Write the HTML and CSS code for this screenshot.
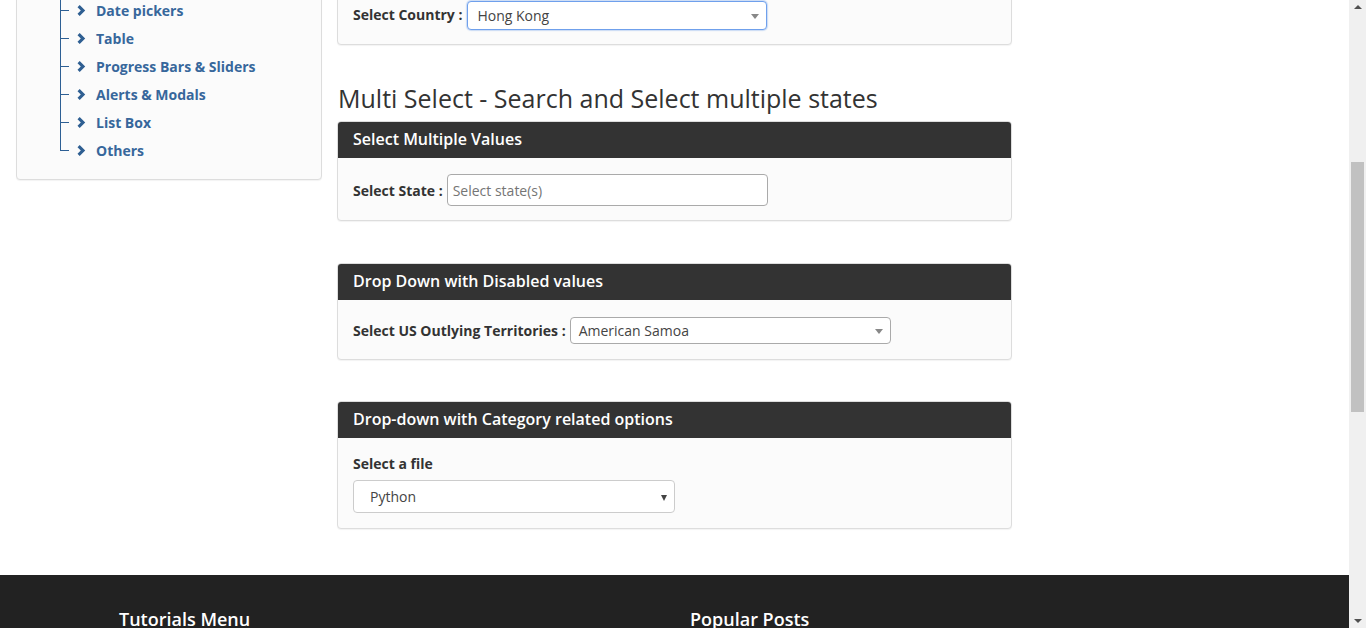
FILE: index.html
```html
<!DOCTYPE html>
<html lang="en">
<head>
<meta charset="utf-8">
<title>Select Dropdown List</title>
<link rel="stylesheet" href="styles.css">
</head>
<body>
<div class="window">
  <div class="page">
    <div class="content">
      <aside class="sidebar-col">
        <div class="sidebar-box">
          <ul class="tree">
            <li><a href="#"><svg class="chev" viewBox="0 0 9 11" width="9" height="11"><polygon points="0.5,2.2 2.7,0 8.2,5.5 2.7,11 0.5,8.8 3.8,5.5"/></svg>Date pickers</a></li>
            <li><a href="#"><svg class="chev" viewBox="0 0 9 11" width="9" height="11"><polygon points="0.5,2.2 2.7,0 8.2,5.5 2.7,11 0.5,8.8 3.8,5.5"/></svg>Table</a></li>
            <li><a href="#"><svg class="chev" viewBox="0 0 9 11" width="9" height="11"><polygon points="0.5,2.2 2.7,0 8.2,5.5 2.7,11 0.5,8.8 3.8,5.5"/></svg>Progress Bars &amp; Sliders</a></li>
            <li><a href="#"><svg class="chev" viewBox="0 0 9 11" width="9" height="11"><polygon points="0.5,2.2 2.7,0 8.2,5.5 2.7,11 0.5,8.8 3.8,5.5"/></svg>Alerts &amp; Modals</a></li>
            <li><a href="#"><svg class="chev" viewBox="0 0 9 11" width="9" height="11"><polygon points="0.5,2.2 2.7,0 8.2,5.5 2.7,11 0.5,8.8 3.8,5.5"/></svg>List Box</a></li>
            <li><a href="#"><svg class="chev" viewBox="0 0 9 11" width="9" height="11"><polygon points="0.5,2.2 2.7,0 8.2,5.5 2.7,11 0.5,8.8 3.8,5.5"/></svg>Others</a></li>
          </ul>
        </div>
      </aside>
      <main class="main-col">
        <section class="panel panel-first">
          <div class="panel-body row-body">
            <span class="label label-raised">Select Country :</span>
            <div class="s2 s2-focus s2-country"><span class="s2-text">Hong Kong</span><span class="s2-arrow"></span></div>
          </div>
        </section>

        <h3 class="section-title">Multi Select - Search and Select multiple states</h3>

        <section class="panel panel-multi">
          <div class="panel-heading">Select Multiple Values</div>
          <div class="panel-body row-body">
            <span class="label">Select State :</span>
            <div class="s2-multi"><span class="placeholder">Select state(s)</span></div>
          </div>
        </section>

        <section class="panel panel-disabled">
          <div class="panel-heading">Drop Down with Disabled values</div>
          <div class="panel-body row-body">
            <span class="label">Select US Outlying Territories :</span>
            <div class="s2 s2-territory"><span class="s2-text">American Samoa</span><span class="s2-arrow"></span></div>
          </div>
        </section>

        <section class="panel panel-category">
          <div class="panel-heading">Drop-down with Category related options</div>
          <div class="panel-body">
            <div class="label label-block">Select a file</div>
            <div class="native-select"><span class="ns-text">Python</span><span class="ns-arrow"></span></div>
          </div>
        </section>
      </main>
    </div>
    <footer class="footer">
      <div class="footer-inner">
        <div class="fcol"><h4 class="ftitle">Tutorials Menu</h4></div>
        <div class="fcol"><h4 class="ftitle">Popular Posts</h4></div>
      </div>
    </footer>
  </div>
  <div class="scrollbar">
    <div class="sb-btn"><span class="sb-up"></span></div>
    <div class="sb-track"><div class="sb-thumb"></div></div>
    <div class="sb-btn sb-btn-bottom"><span class="sb-down"></span></div>
  </div>
</div>
</body>
</html>
```

FILE: styles.css
```css
* { box-sizing: border-box; }

html, body {
  margin: 0;
  padding: 0;
  height: 628px;
  overflow: hidden;
  background: #fff;
  font-family: "Open Sans", "Noto Sans", "Liberation Sans", sans-serif;
  font-size: 14px;
  color: #333;
}

.window {
  display: flex;
  height: 628px;
}

.page {
  flex: 1;
  height: 628px;
  overflow: hidden;
  display: flex;
  flex-direction: column;
}

.content {
  display: flex;
  align-items: flex-start;
}

/* Sidebar */
.sidebar-col {
  width: 337px;
  padding-left: 16px;
  flex-shrink: 0;
}

.sidebar-box {
  width: 306px;
  margin-top: -5px;
  background: #fbfbfb;
  border: 1px solid #ddd;
  border-radius: 4px;
  box-shadow: 0 1px 1px rgba(0,0,0,0.05);
  padding: 0 0 15px;
}

.tree {
  list-style: none;
  margin: 0 0 0 43px;
  padding: 0;
}

.tree li {
  position: relative;
  height: 28px;
  padding-left: 17px;
  display: flex;
  align-items: center;
}

.tree li::before {
  content: "";
  position: absolute;
  left: 0;
  top: 0;
  bottom: 0;
  width: 1px;
  background: #2d5f94;
}

.tree li:last-child::before {
  bottom: 13px;
}

.tree li::after {
  content: "";
  position: absolute;
  left: 0;
  top: 14px;
  width: 9px;
  height: 1px;
  background: #2d5f94;
}

.tree a {
  display: flex;
  align-items: center;
  gap: 10px;
  color: #37679b;
  font-weight: bold;
  font-size: 14px;
  text-decoration: none;
}

.chev {
  flex-shrink: 0;
}

.chev polygon {
  fill: #2f5f92;
}

/* Main column */
.main-col {
  width: 675px;
  flex-shrink: 0;
}

.panel {
  background: #fbfbfb;
  border: 1px solid #ddd;
  border-radius: 4px;
  box-shadow: 0 1px 1px rgba(0,0,0,0.05);
  overflow: hidden;
}

.panel-first {
  margin-top: -16px;
}

.panel-disabled {
  margin-top: 42px;
}

.panel-category {
  margin-top: 41px;
}

.panel-heading {
  background: #333;
  color: #fff;
  font-weight: 600;
  font-size: 16px;
  line-height: 18px;
  height: 37px;
  padding: 9px 15px 10px 16px;
  margin: -1px -1px 0;
}

.panel-body {
  padding: 16px 15px 15px;
}

.panel-first .panel-body {
  padding: 16px 15px 14px;
}

.panel-multi .panel-body {
  padding: 16px 15px 14px;
}

.panel-disabled .panel-body {
  padding: 17px 15px 15px;
}

.row-body {
  display: flex;
  align-items: center;
  gap: 4px;
}

.label {
  font-weight: bold;
  font-size: 14px;
  color: #333;
  white-space: nowrap;
}

.label-raised {
  margin-bottom: 3px;
}

.label-block {
  line-height: 20px;
  margin-bottom: 6px;
}

.section-title {
  margin: 40px 0 10px 1px;
  font-size: 25px;
  line-height: 26px;
  font-weight: normal;
  color: #333;
}

/* select2-like */
.s2 {
  position: relative;
  display: flex;
  align-items: center;
  background: #fff;
  border: 1px solid #aaa;
  border-radius: 4px;
  padding-left: 8px;
  color: #444;
  font-size: 14px;
}

.s2-country {
  width: 300px;
  height: 29px;
  margin-left: 1px;
  padding-left: 9px;
}

.s2-focus {
  border-color: #6fa0ec;
  box-shadow: 0 0 1px 1px rgba(111,160,236,0.35);
}

.s2-territory {
  width: 321px;
  height: 27px;
}

.s2-text {
  line-height: 20px;
  padding-top: 1px;
}

.s2-arrow {
  position: absolute;
  right: 7px;
  top: 50%;
  margin-top: -2px;
  width: 0;
  height: 0;
  border-top: 5px solid #888;
  border-left: 4px solid transparent;
  border-right: 4px solid transparent;
}

.s2-multi {
  width: 321px;
  height: 32px;
  background: #fff;
  border: 1px solid #aaa;
  border-radius: 4px;
  display: flex;
  align-items: center;
  padding-left: 5px;
}

.placeholder {
  color: #757575;
  font-size: 14px;
}

.native-select {
  position: relative;
  width: 322px;
  height: 33px;
  background: #fff;
  border: 1px solid #ccc;
  border-radius: 4px;
  display: flex;
  align-items: center;
  padding-left: 16px;
  color: #444;
  font-size: 14px;
}

.ns-arrow {
  position: absolute;
  right: 7px;
  top: 14px;
  width: 0;
  height: 0;
  border-top: 6px solid #444;
  border-left: 3px solid transparent;
  border-right: 3px solid transparent;
}

/* Footer */
.footer {
  margin-top: 46px;
  background: #222;
  flex: 1;
}

.footer-inner {
  display: flex;
  padding: 33px 0 0 119px;
}

.fcol {
  width: 571px;
}

.ftitle {
  margin: 0;
  color: #fff;
  font-size: 18px;
  line-height: 22px;
  font-weight: 600;
}

/* Scrollbar */
.scrollbar {
  width: 17px;
  height: 628px;
  background: #f0f0f0;
  display: flex;
  flex-direction: column;
  flex-shrink: 0;
}

.sb-btn {
  height: 17px;
  display: flex;
  justify-content: center;
  align-items: center;
}

.sb-up {
  width: 0;
  height: 0;
  border-bottom: 4px solid #505050;
  border-left: 4px solid transparent;
  border-right: 4px solid transparent;
  margin-left: 1px;
  margin-top: -3px;
}

.sb-down {
  width: 0;
  height: 0;
  border-top: 4px solid #505050;
  border-left: 4px solid transparent;
  border-right: 4px solid transparent;
  margin-left: 1px;
  margin-top: 3px;
}

.sb-track {
  flex: 1;
  padding: 145px 2px 0;
}

.sb-thumb {
  height: 250px;
  background: #c1c1c1;
}
```
